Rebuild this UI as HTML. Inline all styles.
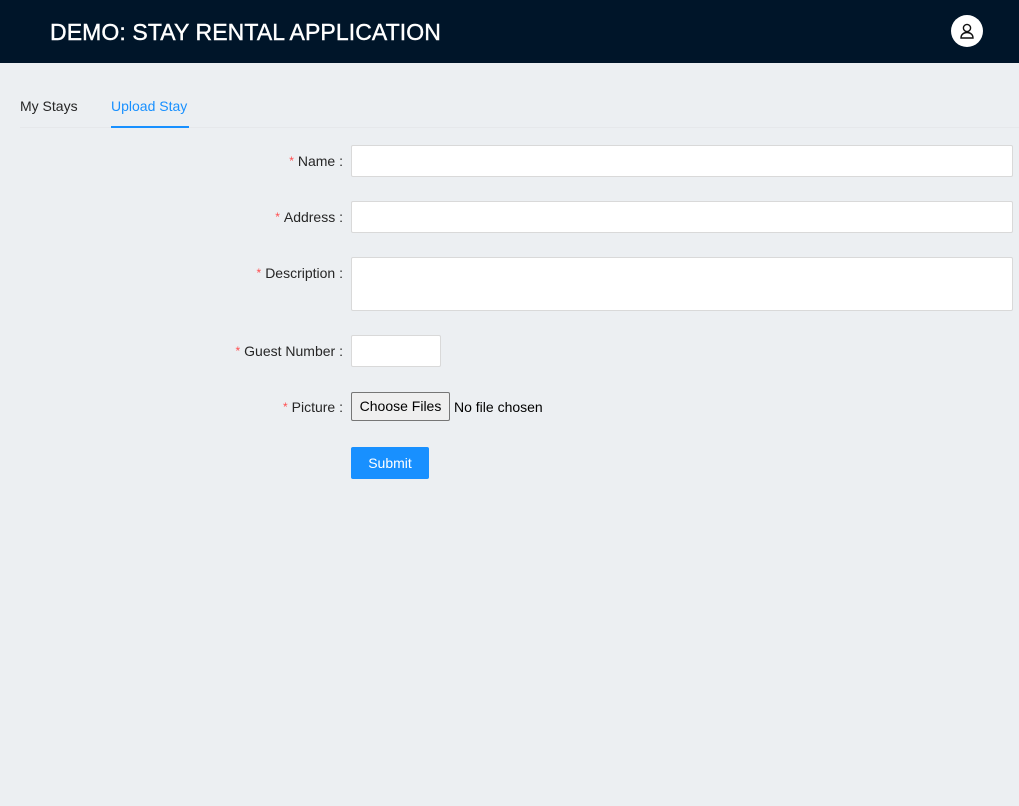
<!DOCTYPE html>
<html><head><style>
*{box-sizing:border-box;margin:0;padding:0}
body{width:1019px;height:806px;background:#eceff2;font-family:"Liberation Sans",sans-serif;font-size:14px;color:#262626;position:relative;overflow:hidden}
.hdr{position:absolute;left:0;top:0;width:1019px;height:63px;background:#001529}
.title{position:absolute;left:50px;top:19px;color:#fff;font-size:23px;letter-spacing:0.1px;-webkit-text-stroke:0.4px #fff}
.av{position:absolute;left:951px;top:15px;width:32px;height:32px;border-radius:50%;background:#fff}
.tab{position:absolute;top:98px;font-size:14px}
.line{position:absolute;left:20px;top:127px;width:999px;height:1px;background:#e6e8eb}
.ink{position:absolute;left:111px;top:126px;width:78px;height:2px;background:#1890ff}
.lbl{position:absolute;right:676px;font-size:14px;color:#262626;white-space:nowrap}
.lbl b{color:#ff4d4f;font-weight:normal;font-size:12px;margin-right:4px;position:relative;top:-1px}
.inp{position:absolute;left:351px;background:#fff;border:1px solid #d9d9d9;border-radius:2px}
.btn{position:absolute;left:351px;top:392px;width:99px;height:29px;border:1px solid #767676;border-radius:2px;background:#efefef;font-size:14px;text-align:center;line-height:27px;color:#000}
.nf{position:absolute;left:454px;top:399px;color:#000}
.sub{position:absolute;left:351px;top:447px;width:78px;height:32px;background:#1890ff;border-radius:2px;color:#fff;text-align:center;line-height:32px}
</style></head><body>
<div class="hdr"><div class="title">DEMO: STAY RENTAL APPLICATION</div>
<div class="av"><svg width="32" height="32" viewBox="0 0 32 32" fill="none" stroke="#111" stroke-width="1.4"><circle cx="16" cy="13" r="3.6"/><path d="M10 23c0-3.5 2.7-5.5 6-5.5s6 2 6 5.5z"/></svg></div></div>
<div class="tab" style="left:20px">My Stays</div>
<div class="tab" style="left:111px;color:#1890ff">Upload Stay</div>
<div class="line"></div><div class="ink"></div>
<div class="lbl" style="top:153px"><b>*</b>Name :</div>
<div class="inp" style="top:145px;width:662px;height:32px"></div>
<div class="lbl" style="top:209px"><b>*</b>Address :</div>
<div class="inp" style="top:201px;width:662px;height:32px"></div>
<div class="lbl" style="top:265px"><b>*</b>Description :</div>
<div class="inp" style="top:257px;width:662px;height:54px"></div>
<div class="lbl" style="top:343px"><b>*</b>Guest Number :</div>
<div class="inp" style="top:335px;width:90px;height:32px"></div>
<div class="lbl" style="top:399px"><b>*</b>Picture :</div>
<div class="btn">Choose Files</div><div class="nf">No file chosen</div>
<div class="sub">Submit</div>
</body></html>
